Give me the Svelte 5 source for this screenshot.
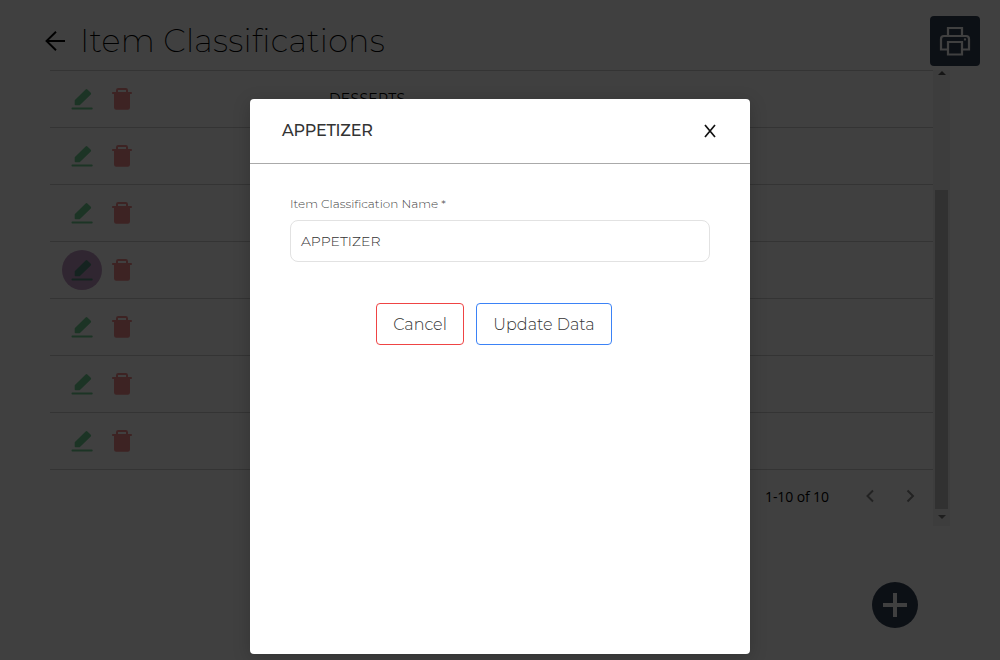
<script>
  const rows = ['DESSERTS', '', '', '', '', '', ''];
  const selected = 3;
</script>

<main>
  <header>
    <svg class="back" viewBox="0 0 22 22" width="22" height="22"><path d="M21 11H2.5M12 1.7 2.5 11l9.5 9.3" fill="none" stroke="#000" stroke-width="1.9"/></svg>
    <h1>Item Classifications</h1>
    <button class="print" aria-label="Print">
      <svg viewBox="0 0 32 32" width="32" height="32" fill="none" stroke="#fff" stroke-width="2.2">
        <path d="M9 11V3h14v8M9 24.500H2V14q0-3 3-3h22q3 0 3 3v10.500h-7M9 17h14v12.500H9z"/><circle cx="26" cy="14.500" r=".5" stroke-width="1.3"/>
      </svg>
    </button>
  </header>

  <section class="panel">
    <div class="table">
      {#each rows as name, i}
        <div class="row">
          <span class="edit" class:selected={i === selected}>
            <svg viewBox="0 0 24 24" width="24" height="24"><path d="M2.300 20.500h19.600q.8 0 .8 1t-.8 1H2.300q-.8 0-.8-1t.8-1zM4.700 17.500v-4.200L15.600 2.400q.9-.9 1.800 0l3.400 3.400q.8.8 0 1.600L9.700 18.300H5.500q-.8 0-.8-.8z"/></svg>
          </span>
          <svg class="trash" viewBox="0 0 24 24" width="24" height="24"><path fill-rule="evenodd" d="M6 5V3.200Q6 1 8.200 1h7.600Q18 1 18 3.200V5h3.200q.8 0 .8 1t-.8 1H20v13.500q0 2.200-2.200 2.200H6.200Q4 22.700 4 20.500V7H2.800Q2 7 2 6t.8-1zm2 0h8V3H8z"/></svg>
          <span class="name">{name}</span>
        </div>
      {/each}
      <div class="pager">
        <span>1-10 of 10</span>
        <svg viewBox="0 0 10 14" width="10" height="14"><path d="M8 1.500 2.500 7 8 12.500"/></svg>
        <svg viewBox="0 0 10 14" width="10" height="14"><path d="M2.500 1.500 8 7l-5.500 5.500"/></svg>
      </div>
    </div>
    <div class="scroll"><i class="up"></i><b></b><i class="down"></i></div>
  </section>

  <button class="add" aria-label="Add"><svg viewBox="0 0 24 24" width="24" height="24"><path d="M12 0v24M0 12h24" stroke="#fff" stroke-width="4"/></svg></button>
</main>

<div class="overlay">
  <div class="dialog" role="dialog">
    <div class="title"><h2>APPETIZER</h2><span class="close"><svg viewBox="0 0 12 14" width="12" height="14"><path d="m1 1 10 12M11 1 1 13" stroke="#111" stroke-width="1.7"/></svg></span></div>
    <div class="form">
      <label for="name">Item Classification Name *</label>
      <div class="input" id="name">APPETIZER</div>
      <div class="buttons">
        <button class="cancel">Cancel</button>
        <button class="update">Update Data</button>
      </div>
    </div>
  </div>
</div>

<style>
  :global(body) { background: #fff; overflow: hidden; }
  main, .overlay { box-sizing: border-box; font-family: Montserrat, Inter, sans-serif; }
  main { width: 1000px; height: 660px; padding: 16px 20px 0 44px; color: #000; }
  header { height: 50px; display: flex; align-items: center; }
  .back { flex: none; }
  h1 { margin: 0 0 0 14px; flex: 1; font-size: 32px; font-weight: 200; letter-spacing: .2px; line-height: 50px; white-space: nowrap; }
  button { font-family: inherit; padding: 0; border: 0; display: flex; align-items: center; justify-content: center; box-sizing: border-box; }
  .print { width: 50px; height: 50px; border-radius: 4px; background: #334155; }
  .panel { margin: 4px 0 0 6px; display: flex; height: 456px; }
  .table { width: 883px; }
  .row { height: 57px; box-sizing: border-box; border-top: 1px solid #d0d0d0; display: flex; align-items: center; padding-left: 12px; }
  .edit { width: 40px; height: 40px; border-radius: 50%; display: flex; align-items: center; justify-content: center; fill: #70cd92; }
  .selected { background: #bf98c3; fill: #568a80; }
  .trash { margin-left: 8px; fill: #f28a8a; }
  .name { margin-left: 195px; font-size: 14px; font-weight: 400; letter-spacing: .3px; }
  .pager { height: 52px; border-top: 1px solid #d0d0d0; display: flex; align-items: center; padding-left: 715px; font: 14px "Open Sans", "Noto Sans", sans-serif; letter-spacing: -.1px; }
  .pager span { width: 100px; flex: none; white-space: nowrap; }
  .pager svg { flex: none; fill: none; stroke: #888; stroke-width: 2; margin-right: 30px; }
  .pager svg:last-child { margin-right: 0; }
  .scroll { width: 17px; background: #f3f3f3; display: flex; flex-direction: column; align-items: center; }
  .scroll i { border: 4px solid transparent; }
  .up { border-bottom-color: #555 !important; border-top: 0 !important; margin-top: 1px; }
  .down { border-top-color: #777 !important; border-bottom: 0 !important; margin-top: 6px; }
  .scroll b { width: 13px; height: 319px; margin-top: 115px; background: #c1c1c1; }
  .add { width: 46px; height: 46px; border-radius: 50%; background: #334155; margin: 56px 0 0 828px; }
  .overlay { position: absolute; inset: 0; width: 1000px; height: 660px; padding: 99px 250px 0; background: rgba(0,0,0,.75); }
  .dialog { height: 555px; background: #fff; border-radius: 4px; box-shadow: 0 4px 18px rgba(0,0,0,.2); }
  .title { box-sizing: border-box; height: 65px; border-bottom: 1px solid #aaa; display: flex; align-items: center; justify-content: space-between; padding: 0 34px 0 32px; }
  .close { display: flex; }
  h2 { margin: -1px 0 0; font-size: 16px; font-weight: 500; letter-spacing: -.2px; color: #333; }
  .form { padding: 30px 40px 0; }
  label { display: block; height: 20px; line-height: 20px; font-size: 12px; font-weight: 300; color: #444; }
  .input { box-sizing: border-box; height: 42px; margin-top: 6px; padding-left: 10px; border: 1px solid #e2e2e2; border-radius: 8px; display: flex; align-items: center; font-size: 14px; font-weight: 300; color: #333; }
  .buttons { display: flex; gap: 12px; margin: 41px 0 0 86px; }
  .buttons button { height: 42px; background: #fff; border-radius: 4px; font-size: 16px; font-weight: 300; color: #333; }
  .cancel { width: 88px; border: 1px solid #ef4444 !important; }
  .update { width: 136px; border: 1px solid #3b82f6 !important; }
</style>
